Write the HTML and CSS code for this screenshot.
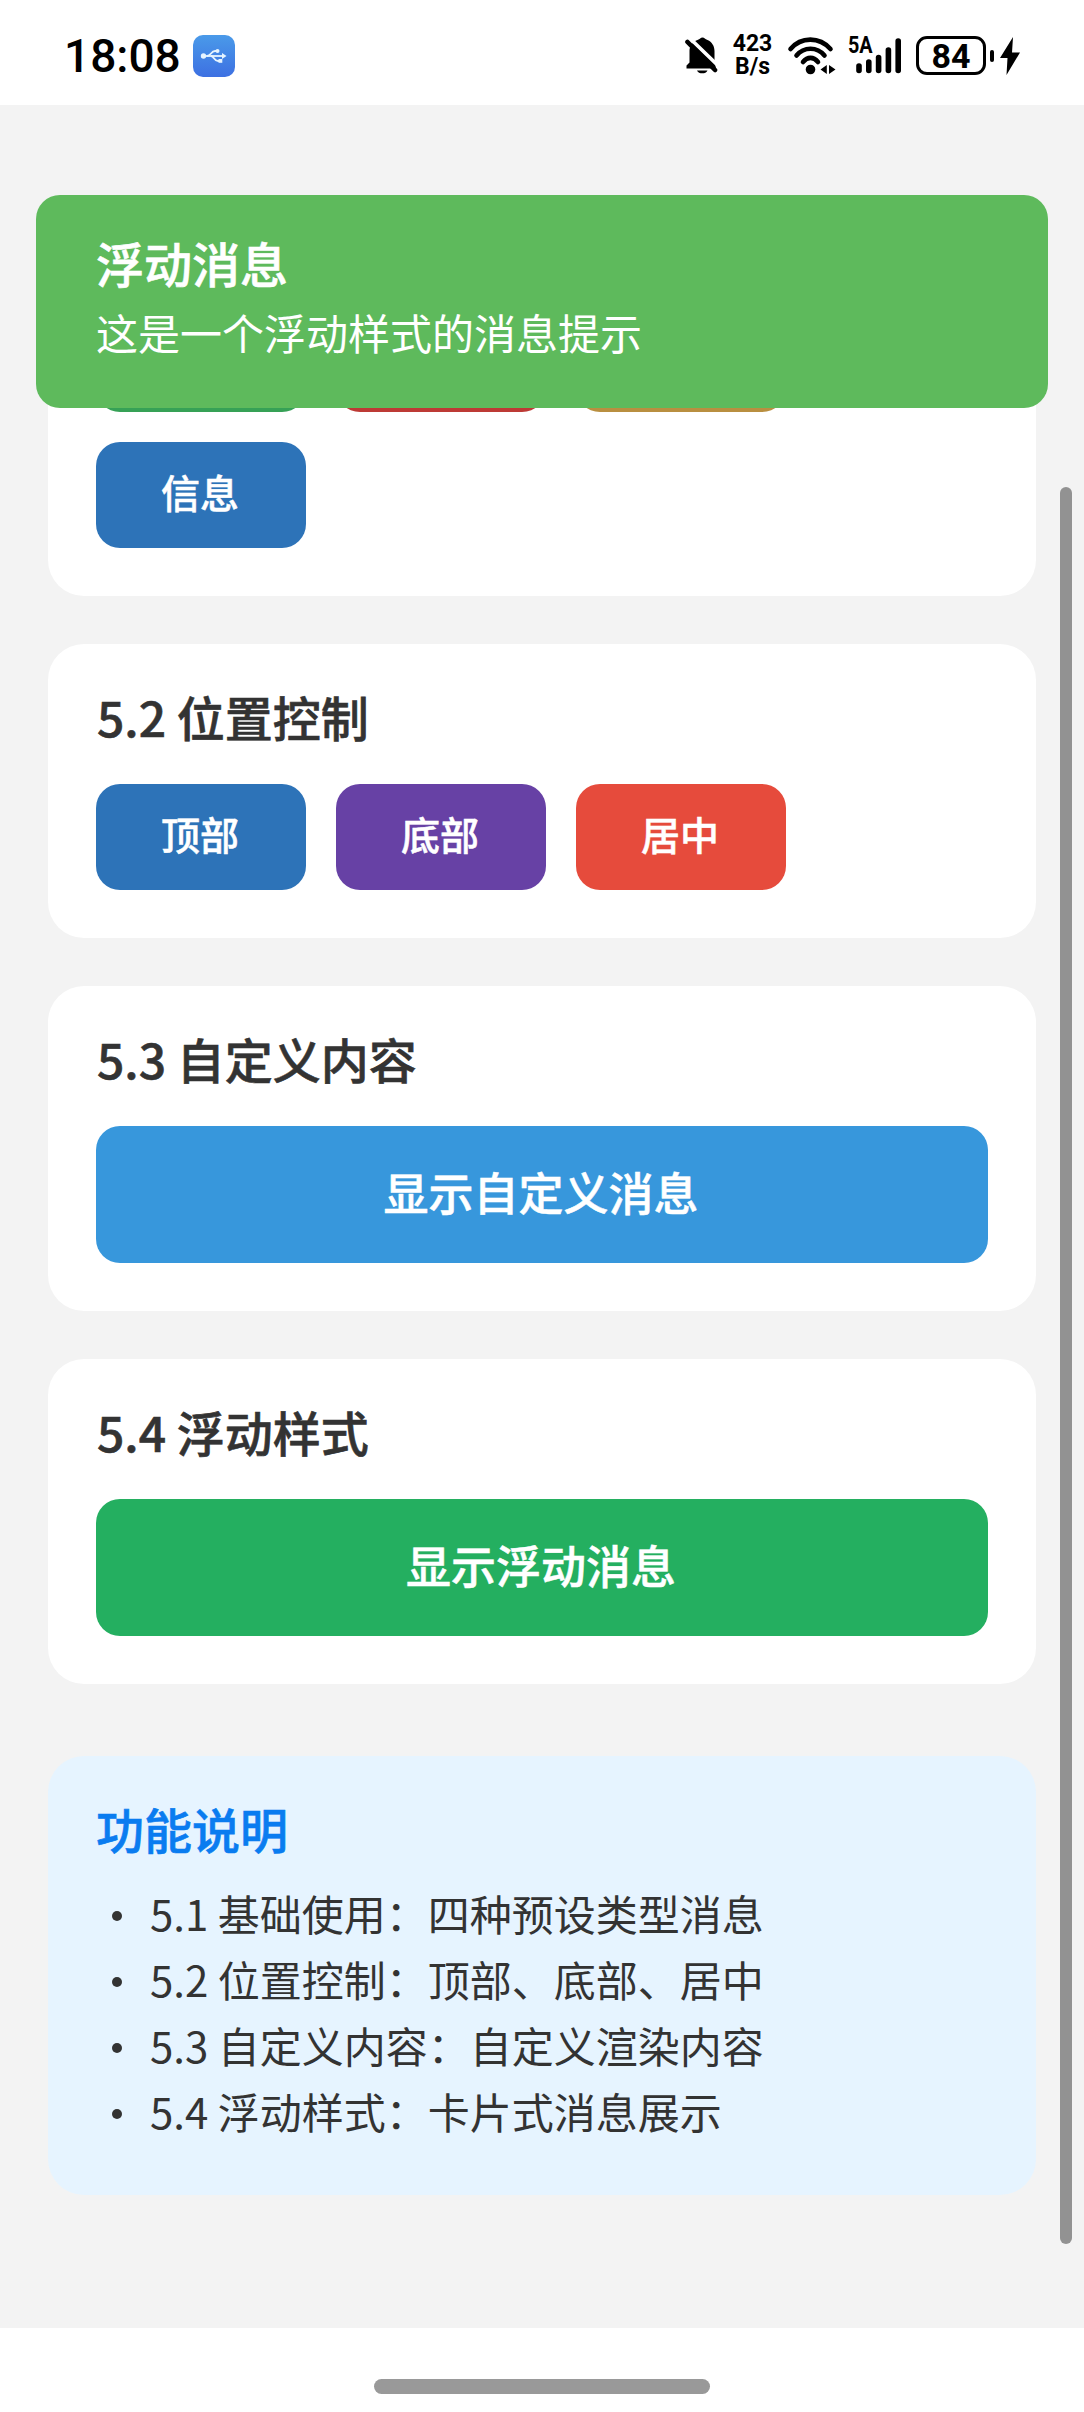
FILE: index.html
```html
<!DOCTYPE html>
<html lang="zh-CN">
<head>
<meta charset="utf-8" />
<title>消息提示</title>
<link rel="stylesheet" href="styles.css">
</head>

<body>
<div class="statusbar">
    <div class="time">18:08</div>
    <svg class="usb" viewBox="0 0 42 42">
        <defs>
            <linearGradient id="usbBg" x1="0" y1="0" x2="0" y2="1">
                <stop offset="0" stop-color="#4a9ae9" />
                <stop offset="1" stop-color="#3d70e2" />
            </linearGradient>
        </defs>
        <rect width="42" height="42" rx="10" fill="url(#usbBg)" />
        <g fill="none" stroke="#e6f4ff" stroke-width="1.8">
            <path d="M10 21H30" />
            <path d="M14 21C18 21 18 16 22 16H24" />
            <path d="M18 21C21 21 21 26 25 26H27" />
        </g>
        <g fill="#e6f4ff">
            <circle cx="10.500" cy="21" r="2.700" />
            <path d="M29 18L33.500 21L29 24Z" />
            <circle cx="24.500" cy="16" r="2" />
            <rect x="25.500" y="24" width="3.800" height="3.800" />
        </g>
    </svg>
    <div class="status-right">
        <svg class="bell" viewBox="0 0 34 38">
            <path d="M12.500 3C15 2 15.500 0.500 17.500 0.500S20 2 22.500 3C27 5 29.500 9 29.500 14V24L31 31.500H1.500V28.500L4.500 25.500V14C4.500 9 7.500 5 12.500 3Z" />
            <path d="M12 33.500H22.500C21 37.300 13.500 37.300 12 33.500Z" />
            <path class="cut" d="M4 0.500L34 29.500" />
            <path class="slash" d="M2.500 5L30 33" />
        </svg>
        <div class="speed"><span>423</span><span>B/s</span></div>
        <svg class="wifi" viewBox="0 0 47 38">
            <g fill="none" stroke="#000" stroke-width="4.600" stroke-linecap="round">
                <path d="M2.500 12C13 -0.500 31.500 -0.500 42.500 12" />
                <path d="M8.500 18.500C16 9.500 29 9.500 36.500 18.500" />
                <path d="M15 25C19.500 19.500 25.500 19.500 30 25" />
            </g>
            <circle cx="22.500" cy="32.500" r="4.800" />
            <path d="M38.800 28V37L32.500 32.500ZM41 28V37L47.500 32.500Z" />
        </svg>
        <div class="signal">
            <span class="net">5A</span>
            <svg viewBox="0 0 54 38">
                <g stroke="#000" stroke-width="5.600" stroke-linecap="round">
                    <path d="M11 29V33.500" />
                    <path d="M20.800 25V33.500" />
                    <path d="M30.600 20.500V33.500" />
                    <path d="M40.400 13V33.500" />
                    <path d="M50.200 4V33.500" />
                </g>
            </svg>
        </div>
        <div class="battery">84</div>
        <div class="battery-tip"></div>
        <svg class="bolt" viewBox="0 0 20 38">
            <path d="M13 0L0 21H7.500L6.500 38L20 15.500H12Z" />
        </svg>
    </div>
</div>

<div class="page">
    <div class="card">
        <div class="row">
            <div class="btn success"></div>
            <div class="btn error"></div>
            <div class="btn warning"></div>
            <div class="btn info">信息</div>
        </div>
    </div>
    <div class="card">
        <h3>5.2 位置控制</h3>
        <div class="row">
            <div class="btn info">顶部</div>
            <div class="btn purple">底部</div>
            <div class="btn red">居中</div>
        </div>
    </div>
    <div class="card">
        <h3>5.3 自定义内容</h3>
        <div class="btn-block blue">显示自定义消息</div>
    </div>
    <div class="card">
        <h3>5.4 浮动样式</h3>
        <div class="btn-block green">显示浮动消息</div>
    </div>
    <div class="card desc">
        <h3>功能说明</h3>
        <ul>
            <li>5.1 基础使用：四种预设类型消息</li>
            <li>5.2 位置控制：顶部、底部、居中</li>
            <li>5.3 自定义内容：自定义渲染内容</li>
            <li>5.4 浮动样式：卡片式消息展示</li>
        </ul>
    </div>
    <div class="scrollbar"></div>
</div>

<div class="homebar"><div class="handle"></div></div>

<!-- 浮动消息 -->
<div class="toast">
    <div class="toast-title">浮动消息</div>
    <div class="toast-text">这是一个浮动样式的消息提示</div>
</div>
</body>
</html>
```

FILE: styles.css
```css
*{ box-sizing:border-box; }

body{
	margin:0;
	width:1084px;
	height:2412px;
	position:relative;
	overflow:hidden;
	background-color:#fff;
	color:#333;
	font-family:"Noto Sans CJK SC", "Noto Sans", sans-serif;
}

h3, ul{
	margin:0;
	padding:0;
}

/* 状态栏 */
.statusbar{
	display:flex;
	align-items:center;
	height:105px;
	padding:6px 64px 0 64px;
	color:#000;
	font-family:Roboto, "Noto Sans", sans-serif;
}
.time{
	width:129px;
	font-size:46px;
	font-weight:500;
	line-height:60px;
}
.usb{
	width:42px;
	height:42px;
}
.status-right{
	display:flex;
	align-items:center;
	margin-left:auto;
}
.bell{
	width:34px;
	height:38px;
	margin-right:12px;
}
.bell .cut, .bell .slash{
	fill:none;
	stroke:#000;
	stroke-width:4.6;
	stroke-linecap:round;
}
.bell .cut{
	stroke:#fff;
	stroke-width:3.6;
}
.speed{
	display:flex;
	flex-direction:column;
	align-items:center;
	width:43px;
	margin-right:14px;
	font-size:23px;
	font-weight:bold;
	line-height:22.5px;
}
.wifi{
	width:47px;
	height:38px;
	margin-right:13px;
	overflow:visible;
}
.signal{
	position:relative;
	width:54px;
	height:38px;
	margin-right:14px;
}
.signal svg{
	display:block;
	width:54px;
	height:38px;
}
.signal .net{
	/* 网络类型叠在信号格左上角 */
	position:absolute;
	left:0;
	top:-2px;
	font-size:23px;
	font-weight:bold;
	line-height:22px;
	transform:scaleX(0.86);
	transform-origin:left top;
}
.battery{
	width:70px;
	height:39px;
	border:3px solid #000;
	border-radius:11px;
	font-size:34px;
	font-weight:bold;
	line-height:35px;
	text-align:center;
}
.battery-tip{
	width:4px;
	height:12px;
	margin:0 6px 0 4px;
	border-radius:2px;
	background-color:#000;
}
.bolt{
	width:20px;
	height:38px;
}

/* 页面内容 */
.page{
	position:relative;
	height:2223px;
	padding:153px 48px 0;
	background-color:#f3f3f3;
}
.card{
	margin-bottom:48px;
	padding:48px;
	border-radius:36px;
	background-color:#fff;
}
.card h3{
	height:56px;
	margin-bottom:36px;
	padding-left:1px;
	font-size:48px;
	font-weight:500;
	line-height:49px;
	-webkit-text-stroke:0.6px;
}
.row{
	display:flex;
	flex-wrap:wrap;
	gap:30px;
}
.btn{
	width:210px;
	height:106px;
	padding-right:2px;
	border-radius:24px;
	color:#fff;
	font-size:39px;
	font-weight:500;
	line-height:99px;
	text-align:center;
	-webkit-text-stroke:0.5px;
}
.btn-block{
	height:137px;
	padding-right:2px;
	border-radius:24px;
	color:#fff;
	font-size:45px;
	font-weight:500;
	line-height:131px;
	text-align:center;
	-webkit-text-stroke:0.5px;
}
.success{ background-color:#36a156; }
.error{ background-color:#bd3a35; }
.warning{ background-color:#b98f40; }
.info{ background-color:#2d73b8; }
.purple{ background-color:#6741a5; }
.red{ background-color:#e64b3c; }
.blue{ background-color:#3797dc; }
.green{ background-color:#24af60; }

/* 功能说明 */
.desc{
	height:439px;
	margin-top:72px;
	background-color:#e6f4ff;
}
.desc h3{
	margin-bottom:20px;
	padding-left:0;
	color:#0a7cf0;
}
.desc ul{ list-style:none; }
.desc li{
	display:flex;
	align-items:center;
	font-size:42px;
	line-height:66px;
}
.desc li:before{
	content:"";
	width:10px;
	height:10px;
	margin:5px 28px 0 16px;
	border-radius:50%;
	background-color:#333;
}

.scrollbar{
	position:absolute;
	right:12px;
	top:382px;
	width:12px;
	height:1757px;
	border-radius:6px;
	background-color:#929292;
}

/* 底部手势条 */
.homebar{
	display:flex;
	justify-content:center;
	height:84px;
	padding-top:51px;
}
.handle{
	width:336px;
	height:15px;
	border-radius:8px;
	background-color:#999;
}

.toast{
	position:absolute;
	left:36px;
	top:195px;
	width:1012px;
	height:213px;
	padding:35px 60px 0;
	border-radius:24px;
	background-color:#5eba5c;
	color:#fff;
}
.toast-title{
	font-size:48px;
	font-weight:500;
	line-height:64px;
	-webkit-text-stroke:0.6px;
}
.toast-text{
	margin-top:10px;
	font-size:42px;
	line-height:56px;
}
```
